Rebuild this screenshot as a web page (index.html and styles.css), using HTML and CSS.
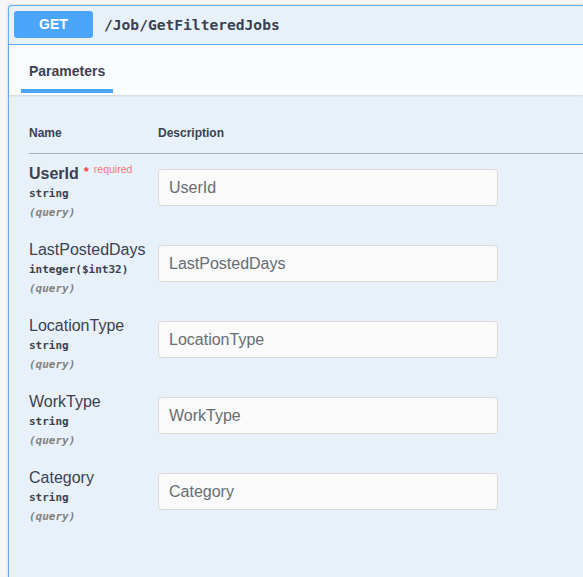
FILE: index.html
```html
<!DOCTYPE html>
<html>
<head>
<meta charset="utf-8">
<link rel="stylesheet" href="styles.css">
</head>
<body>
<div class="opblock">
  <div class="summary">
    <span class="method">GET</span>
    <span class="path">/Job/GetFilteredJobs</span>
  </div>
  <div class="tabs">
    <div class="tab">Parameters</div>
  </div>
  <div class="params">
    <div class="row head">
      <div class="col-name">Name</div>
      <div class="col-desc">Description</div>
    </div>
    <div class="row">
      <div class="col-name">
        <div class="pname strong">UserId<span class="star">*</span><span class="req">required</span></div>
        <div class="ptype">string</div>
        <div class="pin">(query)</div>
      </div>
      <div class="col-desc"><input class="field" type="text" placeholder="UserId"></div>
    </div>
    <div class="row">
      <div class="col-name">
        <div class="pname">LastPostedDays</div>
        <div class="ptype">integer($int32)</div>
        <div class="pin">(query)</div>
      </div>
      <div class="col-desc"><input class="field" type="text" placeholder="LastPostedDays"></div>
    </div>
    <div class="row">
      <div class="col-name">
        <div class="pname">LocationType</div>
        <div class="ptype">string</div>
        <div class="pin">(query)</div>
      </div>
      <div class="col-desc"><input class="field" type="text" placeholder="LocationType"></div>
    </div>
    <div class="row">
      <div class="col-name">
        <div class="pname">WorkType</div>
        <div class="ptype">string</div>
        <div class="pin">(query)</div>
      </div>
      <div class="col-desc"><input class="field" type="text" placeholder="WorkType"></div>
    </div>
    <div class="row">
      <div class="col-name">
        <div class="pname">Category</div>
        <div class="ptype">string</div>
        <div class="pin">(query)</div>
      </div>
      <div class="col-desc"><input class="field" type="text" placeholder="Category"></div>
    </div>
  </div>
</div>
</body>
</html>
```

FILE: styles.css
```css
html, body {
  margin: 0;
  padding: 0;
  height: 100%;
  overflow: hidden;
}
body {
  background: #f6f6f6;
  font-family: "Liberation Sans", Arial, sans-serif;
  color: #3b4151;
}
.opblock {
  margin: 5px 0 0 8px;
  width: calc(100% - 8px);
  height: calc(100% - 5px);
  border: 1px solid #61affe;
  border-right: 0;
  border-bottom: 0;
  border-radius: 4px 0 0 0;
  background: #e8f1fa;
  box-shadow: 0 0 3px rgba(0, 0, 0, 0.19);
  box-sizing: border-box;
}
.summary {
  display: flex;
  align-items: center;
  padding: 5px 5px 6px;
  border-bottom: 1px solid #61affe;
}
.method {
  width: 79px;
  height: 27px;
  line-height: 27px;
  border-radius: 3px;
  background: #4ca5fd;
  color: #ffffff;
  font-weight: bold;
  font-size: 14px;
  text-align: center;
}
.path {
  padding-left: 11px;
  font-family: "DejaVu Sans Mono", monospace;
  font-weight: bold;
  font-size: 14.6px;
  color: #3b4151;
}
.tabs {
  height: 50px;
  box-sizing: border-box;
  display: flex;
  align-items: flex-end;
  padding: 0 12px 2px;
  background: #f9fdff;
  box-shadow: 0 1px 2px rgba(0, 0, 0, 0.12);
}
.tab {
  padding: 0 8px 9px;
  line-height: 17px;
  font-size: 14px;
  font-weight: bold;
  border-bottom: 4px solid #4ca5fd;
}
.params {
  padding: 31px 0 0 20px;
}
.row {
  display: flex;
}
.row.head {
  border-bottom: 1px solid #a9b1ba;
  font-size: 12px;
  font-weight: bold;
  line-height: 15px;
  padding-bottom: 12px;
}
.col-name {
  width: 129px;
  flex: none;
}
.row:not(.head) .col-name {
  padding: 10px 0 8px;
  height: 58px;
}
.row:not(.head) .col-desc {
  padding-top: 15px;
}
.pname {
  font-size: 16px;
  line-height: 19px;
  height: 19px;
  white-space: nowrap;
}
.pname.strong {
  font-weight: bold;
}
.star {
  color: #f93e3e;
  font-size: 13px;
  line-height: 10px;
  padding-left: 5px;
  position: relative;
  top: -3px;
}
.req {
  color: #fb7676;
  font-size: 10.5px;
  line-height: 10px;
  font-weight: normal;
  padding-left: 5px;
  position: relative;
  top: -6px;
}
.ptype {
  margin-top: 1px;
  font-family: "DejaVu Sans Mono", monospace;
  font-size: 11px;
  font-weight: bold;
  line-height: 19px;
}
.pin {
  font-family: "DejaVu Sans Mono", monospace;
  font-size: 11px;
  font-weight: bold;
  font-style: italic;
  color: #828282;
  line-height: 19px;
}
.field {
  display: block;
  width: 340px;
  height: 37px;
  box-sizing: border-box;
  margin: 0;
  padding: 0 10px;
  border: 1px solid #d9d9d9;
  border-radius: 4px;
  background: #fafafa;
  font-family: "Liberation Sans", Arial, sans-serif;
  font-size: 16px;
  color: #3b4151;
  outline: none;
}
.field::placeholder {
  color: #676d75;
  opacity: 1;
}
```
